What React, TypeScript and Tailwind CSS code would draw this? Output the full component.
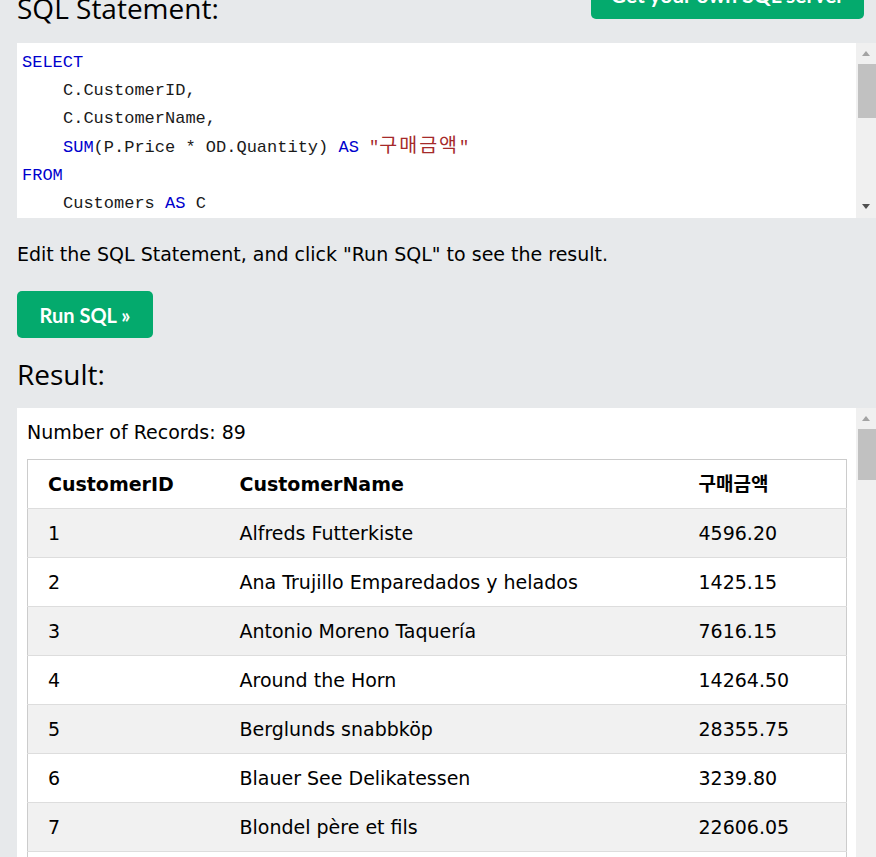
import React from 'react';

const ROWS = [
  { id: 1, name: 'Alfreds Futterkiste', total: '4596.20' },
  { id: 2, name: 'Ana Trujillo Emparedados y helados', total: '1425.15' },
  { id: 3, name: 'Antonio Moreno Taquería', total: '7616.15' },
  { id: 4, name: 'Around the Horn', total: '14264.50' },
  { id: 5, name: 'Berglunds snabbköp', total: '28355.75' },
  { id: 6, name: 'Blauer See Delikatessen', total: '3239.80' },
  { id: 7, name: 'Blondel père et fils', total: '22606.05' },
  { id: 8, name: 'Bólido Comidas preparadas', total: '5297.80' },
];

const verdana = "font-['DejaVu_Sans','Noto_Sans_CJK_KR',sans-serif]";
const mono = "font-['Liberation_Mono','Noto_Sans_CJK_KR',monospace]";
const heading = "font-['Open_Sans','Noto_Sans',sans-serif]";

const Kw = ({ children }: { children: React.ReactNode }) => <span className="text-[#0000cd]">{children}</span>;

const Scrollbar = ({ thumbTop, thumbHeight, downArrow }: { thumbTop: number; thumbHeight: number; downArrow?: boolean }) => (
  <div className="relative w-[20px] shrink-0 bg-[#f0f0f0]">
    <div className="absolute left-[6px] top-[8px] h-0 w-0 border-x-[4px] border-b-[5px] border-x-transparent border-b-[#a3a3a3]" />
    <div className="absolute left-[2px] right-0 bg-[#c1c1c1]" style={{ top: thumbTop, height: thumbHeight }} />
    {downArrow && (
      <div className="absolute bottom-[9px] left-[6px] h-0 w-0 border-x-[4px] border-t-[5px] border-x-transparent border-t-[#505050]" />
    )}
  </div>
);

const App: React.FC = () => {
  return (
    <div className="h-[857px] w-[876px] overflow-hidden bg-[#e7e9eb] pl-[17px] text-black">
      {/* header row, top is scrolled off */}
      <div className="-mt-[30px] flex h-[49px] items-end justify-between pr-[12px]">
        <h2 className={`${heading} -mb-[4px] text-[28px] leading-[30px] text-black`}>SQL Statement:</h2>
        <button className="h-[49px] w-[273px] rounded-[5px] bg-[#04aa6d] text-[21px] font-bold text-white font-['Lato',sans-serif]">
          Get your own SQL server
        </button>
      </div>

      <div className="mt-[24px] flex h-[175px]">
        <div className={`${mono} flex-1 bg-white pl-[5px] pt-[6px] text-[17px] leading-[28px] text-[#1a1a1a]`}>
          <div><Kw>SELECT</Kw></div>
          <div className="pl-[41px]">C.CustomerID,</div>
          <div className="pl-[41px]">C.CustomerName,</div>
          <div className="pl-[41px]">
            <Kw>SUM</Kw>(P.Price * OD.Quantity) <Kw>AS</Kw>{' '}
            <span className="text-[#a52a2a]">
              "<span className="text-[19.5px] tracking-[2px]">구매금액</span>"
            </span>
          </div>
          <div><Kw>FROM</Kw></div>
          <div className="pl-[41px]">
            Customers <Kw>AS</Kw> C
          </div>
        </div>
        <Scrollbar thumbTop={21} thumbHeight={54} downArrow />
      </div>

      <p className={`${verdana} mt-[24px] text-[19px] leading-[24px]`}>
        Edit the SQL Statement, and click "Run SQL" to see the result.
      </p>

      <button className="mt-[25px] h-[47px] w-[136px] rounded-[5px] bg-[#04aa6d] text-[20px] font-bold text-white font-['Lato',sans-serif]">
        Run SQL »
      </button>

      <h2 className={`${heading} mt-[19px] text-[28px] leading-[34px]`}>Result:</h2>

      <div className="mt-[17px] flex h-[460px]">
        <div className={`${verdana} flex-1 bg-white pl-[10px] pr-[9px] pt-[12px] text-[19px]`}>
          <div className="leading-[24px]">Number of Records: 89</div>
          <table className="mt-[15px] w-full border-collapse border border-[#cccccc]">
            <thead>
              <tr className="h-[49px] text-left">
                <th className="w-[192px] pl-[20px] font-bold">CustomerID</th>
                <th className="w-[459px] pl-[20px] font-bold">CustomerName</th>
                <th className="pl-[20px] font-bold">구매금액</th>
              </tr>
            </thead>
            <tbody>
              {ROWS.map((r, i) => (
                <tr key={r.id} className={`h-[49px] border-t border-[#dddddd] ${i % 2 === 0 ? 'bg-[#f1f1f1]' : 'bg-white'}`}>
                  <td className="pl-[20px]">{r.id}</td>
                  <td className="pl-[20px]">{r.name}</td>
                  <td className="pl-[20px]">{r.total}</td>
                </tr>
              ))}
            </tbody>
          </table>
        </div>
        <Scrollbar thumbTop={21} thumbHeight={51} />
      </div>
    </div>
  );
};

export default App;
